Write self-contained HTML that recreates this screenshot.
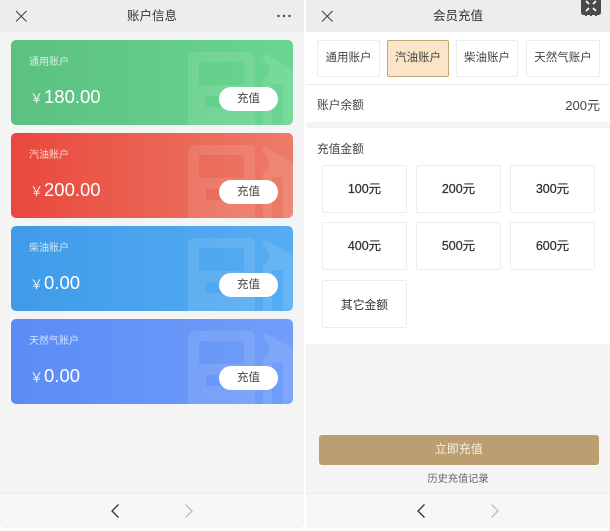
<!DOCTYPE html>
<html>
<head>
<meta charset="utf-8">
<style>
*{box-sizing:border-box;margin:0;padding:0}
html,body{width:610px;height:531px;background:#fff;overflow:hidden}
body{font-family:"Liberation Sans","Noto Sans CJK SC",sans-serif;color:#333}
.wrap{position:relative;width:610px;height:531px;filter:blur(.35px)}
.abs{position:absolute}
.panel{position:absolute;top:0;width:304px;height:528px;background:#f4f4f4;border-radius:0 0 5px 5px;overflow:hidden}
.hd{position:absolute;left:0;top:0;width:304px;height:32px;background:#ededed;text-align:center;font-size:12.5px;line-height:32px;color:#333}
.ft{position:absolute;left:0;top:493px;width:304px;height:35px;background:#f7f7f7;border-top:1px solid #ebebeb}
.card{position:absolute;left:11px;width:282px;height:85.5px;border-radius:5px;overflow:hidden;color:#fff}
.card svg{position:absolute;left:0;top:0}
.card .n{position:absolute;left:18px;top:17.5px;font-size:10px;line-height:12px;opacity:.75}
.card .a{position:absolute;left:19px;top:46.5px;font-size:18.5px;line-height:22px;white-space:nowrap}
.card .a i{font-style:normal;font-size:13px;margin-right:1px;opacity:.85}
.card .b{position:absolute;left:208px;top:47px;width:59px;height:24px;border-radius:12px;background:#fff;color:#444;text-align:center;font-size:11.5px;line-height:24px}
.tab{position:absolute;top:40px;height:37px;background:#fff;border:1.5px solid #ececec;border-radius:2px;font-size:11.5px;line-height:34px;text-align:center;color:#444;white-space:nowrap}
.tab.on{background:#fbe5c6;border-color:#c4a673;color:#444}
.amt{position:absolute;width:85px;height:48px;background:#fff;border:1.5px solid #ececec;border-radius:2px;text-align:center;line-height:47px;font-size:12.5px;color:#333;-webkit-text-stroke:.25px #333}
</style>
</head>
<body>
<div class="wrap">

<!-- LEFT PANEL -->
<div class="panel" style="left:0">
  <div class="hd">账户信息</div>
  <svg class="abs" style="left:14px;top:9px" width="14" height="14" viewBox="0 0 14 14"><path d="M2 2L12.5 12.5M12.5 2L2 12.5" stroke="#444" stroke-width="1.1" fill="none"/></svg>
  <svg class="abs" style="left:276px;top:13px" width="16" height="6" viewBox="0 0 16 6"><circle cx="2.5" cy="3" r="1.2" fill="#444"/><circle cx="8" cy="3" r="1.2" fill="#444"/><circle cx="13.5" cy="3" r="1.2" fill="#444"/></svg>

  <div class="card" style="top:39.5px;background:linear-gradient(90deg,#5bc080,#6ad692)">
    <svg width="282" height="86" viewBox="0 0 282 86"><g fill="#fff" fill-opacity=".1"><path fill-rule="evenodd" d="M177 19q0-7 7-7h53q7 0 7 7v67h-67zM188 22v23h45V22zM195 56v11h20V56z"/><path d="M251 17q2-4 6-2L282 30V86H272V44H261V86H252V40L258 34V27z"/></g></svg>
    <div class="n">通用账户</div><div class="a"><i>￥</i>180.00</div><div class="b">充值</div>
  </div>

  <div class="card" style="top:132.5px;background:linear-gradient(90deg,#e9483c,#ec7c68)">
    <svg width="282" height="86" viewBox="0 0 282 86"><g fill="#fff" fill-opacity=".1"><path fill-rule="evenodd" d="M177 19q0-7 7-7h53q7 0 7 7v67h-67zM188 22v23h45V22zM195 56v11h20V56z"/><path d="M251 17q2-4 6-2L282 30V86H272V44H261V86H252V40L258 34V27z"/></g></svg>
    <div class="n">汽油账户</div><div class="a"><i>￥</i>200.00</div><div class="b">充值</div>
  </div>

  <div class="card" style="top:225.5px;background:linear-gradient(90deg,#3f9be9,#56adf3)">
    <svg width="282" height="86" viewBox="0 0 282 86"><g fill="#fff" fill-opacity=".1"><path fill-rule="evenodd" d="M177 19q0-7 7-7h53q7 0 7 7v67h-67zM188 22v23h45V22zM195 56v11h20V56z"/><path d="M251 17q2-4 6-2L282 30V86H272V44H261V86H252V40L258 34V27z"/></g></svg>
    <div class="n">柴油账户</div><div class="a"><i>￥</i>0.00</div><div class="b">充值</div>
  </div>

  <div class="card" style="top:318.5px;background:linear-gradient(90deg,#5a8cf6,#719ef9)">
    <svg width="282" height="86" viewBox="0 0 282 86"><g fill="#fff" fill-opacity=".1"><path fill-rule="evenodd" d="M177 19q0-7 7-7h53q7 0 7 7v67h-67zM188 22v23h45V22zM195 56v11h20V56z"/><path d="M251 17q2-4 6-2L282 30V86H272V44H261V86H252V40L258 34V27z"/></g></svg>
    <div class="n">天然气账户</div><div class="a"><i>￥</i>0.00</div><div class="b">充值</div>
  </div>

  <div class="ft"></div>
  <svg class="abs" style="left:108px;top:502px" width="14" height="18" viewBox="0 0 14 18"><path d="M10.5 2.5L4 9L10.5 15.5" stroke="#333" stroke-width="1.3" fill="none"/></svg>
  <svg class="abs" style="left:182px;top:502px" width="14" height="18" viewBox="0 0 14 18"><path d="M3.5 2.5L10 9L3.5 15.5" stroke="#bdbdbd" stroke-width="1.3" fill="none"/></svg>
</div>

<!-- RIGHT PANEL -->
<div class="panel" style="left:306px;width:304px">
  <div class="hd">会员充值</div>
  <svg class="abs" style="left:14px;top:9px" width="14" height="14" viewBox="0 0 14 14"><path d="M2 2L12.5 12.5M12.5 2L2 12.5" stroke="#444" stroke-width="1.1" fill="none"/></svg>

  <div class="abs" style="left:0;top:32px;width:304px;height:53px;background:#fff;border-bottom:1px solid #ebebeb"></div>
  <div class="tab" style="left:11px;width:63px">通用账户</div>
  <div class="tab on" style="left:81px;width:62px">汽油账户</div>
  <div class="tab" style="left:150px;width:62px">柴油账户</div>
  <div class="tab" style="left:220px;width:74px">天然气账户</div>

  <div class="abs" style="left:0;top:85px;width:304px;height:37px;background:#fff"></div>
  <div class="abs" style="left:11px;top:96.5px;font-size:11.7px;line-height:17px;color:#444">账户余额</div>
  <div class="abs" style="right:10px;top:96.5px;font-size:13px;line-height:17px;color:#444">200元</div>

  <div class="abs" style="left:0;top:128px;width:304px;height:216px;background:#fff"></div>
  <div class="abs" style="left:11px;top:141.5px;font-size:11.7px;line-height:16px;color:#444">充值金额</div>

  <div class="amt" style="left:16px;top:165px">100元</div>
  <div class="amt" style="left:110px;top:165px">200元</div>
  <div class="amt" style="left:204px;top:165px">300元</div>
  <div class="amt" style="left:16px;top:222px">400元</div>
  <div class="amt" style="left:110px;top:222px">500元</div>
  <div class="amt" style="left:204px;top:222px">600元</div>
  <div class="amt" style="left:16px;top:280px;font-size:11.8px;line-height:48px;-webkit-text-stroke:0">其它金额</div>

  <div class="abs" style="left:12.5px;top:435px;width:280.5px;height:30px;background:#bc9f71;border-radius:3px;color:#f5efe4;text-align:center;font-size:12px;line-height:29px">立即充值</div>
  <div class="abs" style="left:0;top:472px;width:304px;text-align:center;font-size:10.2px;line-height:15px;color:#666">历史充值记录</div>

  <div class="ft"></div>
  <svg class="abs" style="left:108px;top:502px" width="14" height="18" viewBox="0 0 14 18"><path d="M10.5 2.5L4 9L10.5 15.5" stroke="#333" stroke-width="1.3" fill="none"/></svg>
  <svg class="abs" style="left:182px;top:502px" width="14" height="18" viewBox="0 0 14 18"><path d="M3.5 2.5L10 9L3.5 15.5" stroke="#bdbdbd" stroke-width="1.3" fill="none"/></svg>
</div>

<!-- top-right corner badge -->
<svg class="abs" style="left:581px;top:0" width="20" height="17" viewBox="0 0 20 17">
  <path d="M0 0H20V12q0 3-3 3h-1v1h-2v-1h-3v1H9v-1H6v1H4v-1H3q-3 0-3-3z" fill="#4a4a4a"/>
  <path d="M5 1L8 4M15 1L12 4M5 11L8 8M15 11L12 8" stroke="#fff" stroke-width="1.6" fill="none"/>
</svg>

</div>
</body>
</html>
